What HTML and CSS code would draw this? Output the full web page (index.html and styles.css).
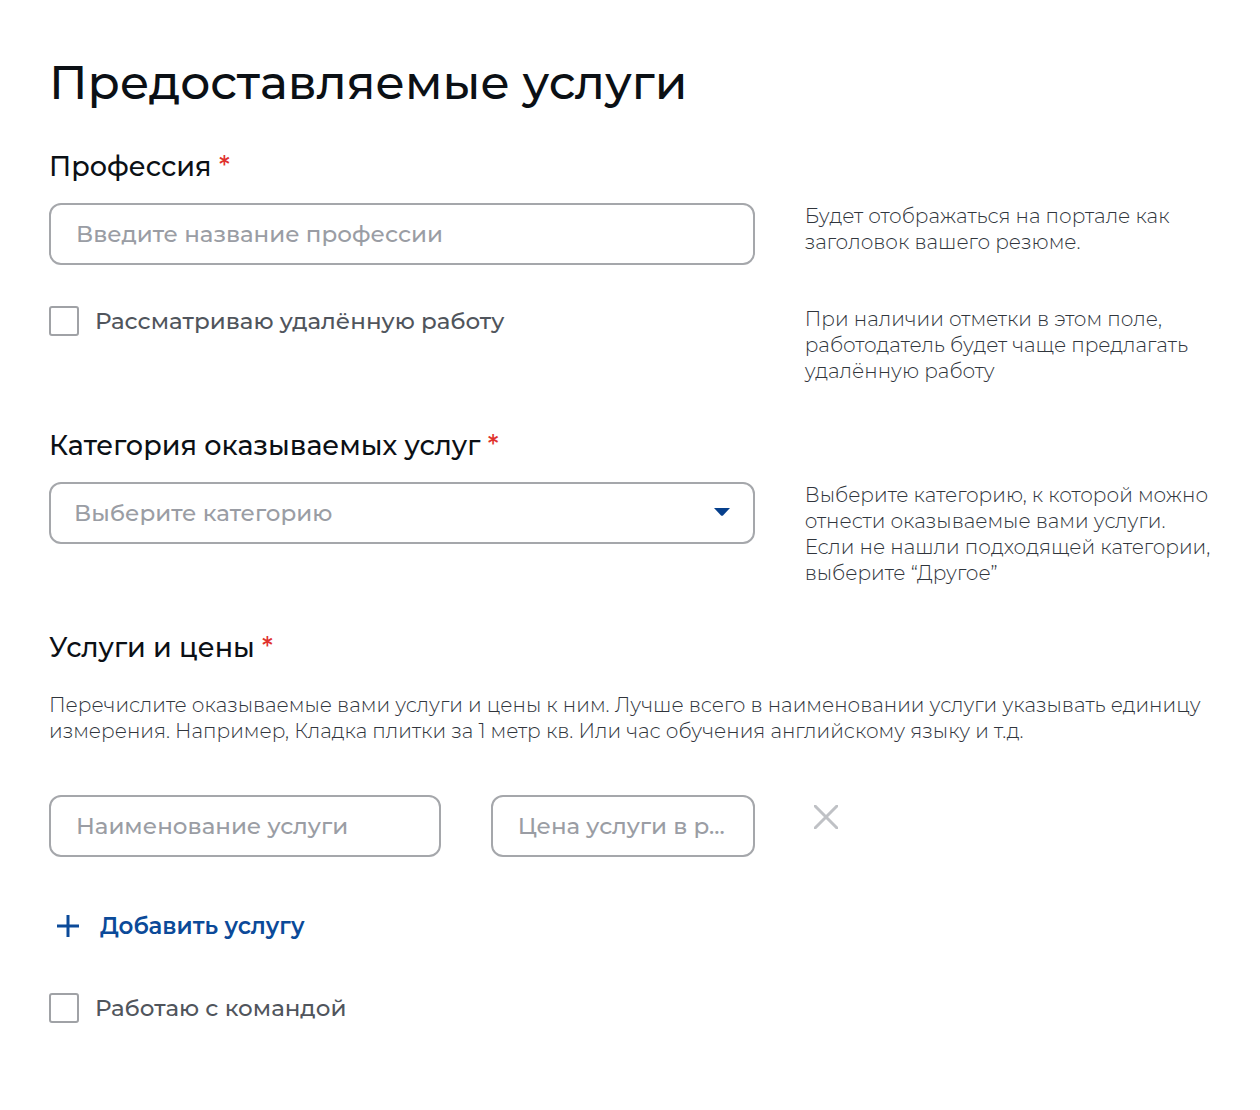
FILE: index.html
```
<!DOCTYPE html>
<html lang="ru">
<head>
	<meta charset="utf-8">
	<meta name="viewport" content="width=device-width, initial-scale=1">
	<title>Предоставляемые услуги</title>
	<link rel="stylesheet" href="styles.css">
</head>
<body>

	<form class="services">
		<h1>Предоставляемые услуги</h1>

		<label class="title" for="profession">Профессия <span class="required">*</span></label>
		<div class="row row-profession">
			<input class="field" id="profession" type="text" placeholder="Введите название профессии" required aria-describedby="profession-hint">
			<p class="hint" id="profession-hint">Будет отображаться на портале как<br>заголовок вашего резюме.</p>
		</div>

		<div class="row">
			<label class="check"><input type="checkbox" name="remote"> Рассматриваю удалённую работу</label>
			<p class="hint">При наличии отметки в этом поле,<br>работодатель будет чаще предлагать<br>удалённую работу</p>
		</div>

		<label class="title" for="category">Категория оказываемых услуг <span class="required">*</span></label>
		<div class="row">
			<div class="select">
				<select class="field" id="category" required>
					<option value="">Выберите категорию</option>
					<option>Другое</option>
				</select>
				<svg class="arrow" width="16" height="8" viewBox="0 0 16 8" aria-hidden="true"><path d="M0 0h16L9 7.4q-1 .8-2 0z"/></svg>
			</div>
			<p class="hint">Выберите категорию, к которой можно<br>отнести оказываемые вами услуги.<br>Если не нашли подходящей категории,<br>выберите “Другое”</p>
		</div>

		<h2 class="title title-services">Услуги и цены <span class="required">*</span></h2>
		<p class="hint">Перечислите оказываемые вами услуги и цены к ним. Лучше всего в наименовании услуги указывать единицу измерения. Например, Кладка плитки за 1 метр кв. Или час обучения английскому языку и т.д.</p>

		<div class="row row-service">
			<div class="service">
				<input class="field" type="text" placeholder="Наименование услуги" aria-label="Наименование услуги">
				<input class="field" type="text" placeholder="Цена услуги в р..." aria-label="Цена услуги">
			</div>
			<button class="remove" type="button" aria-label="Удалить услугу">
				<svg width="24" height="24" viewBox="0 0 24 24"><path d="M1 1l22 22M23 1L1 23"/></svg>
			</button>
		</div>

		<button class="add" type="button">
			<svg width="22" height="22" viewBox="0 0 22 22" aria-hidden="true"><path d="M11 0v22M0 11h22"/></svg>
			Добавить услугу
		</button>

		<label class="check"><input type="checkbox" name="team"> Работаю с командой</label>
	</form>

</body>
</html>
```

FILE: styles.css
```
*
{
	box-sizing: border-box;
}
body
{
	margin: 0;
	background-color: #fff;
	color: #0b1015;
	font-family: Montserrat, Inter, sans-serif;
	font-size: 23px;
	font-weight: 500;
}
input, select, button
{
	font: inherit;
}
.services
{
	padding: 55px 52px 54px 49px;
}


/*
	Titles
*/
h1
{
	margin: 0 0 39px;
	font-size: 47px;
	line-height: 56px;
	font-weight: 500;
}
.title
{
	display: block;
	margin: 0 0 19px;
	font-size: 27px;
	line-height: 34px;
	font-weight: 500;
}
.title-services
{
	margin-bottom: 27px;
}
.required
{
	color: #e0322d;
}


/*
	Rows : control on the left, hint on the right
*/
.row
{
	display: grid;
	grid-template-columns: minmax(0, 7fr) minmax(0, 4fr);
	column-gap: 50px;
	align-items: start;
	margin-bottom: 45px;
}
.row-profession
{
	margin-bottom: 41px;
}
.row-service
{
	margin: 51px 0 52px;
}
.hint
{
	margin: 0;
	font-size: 20px;
	line-height: 26px;
	font-weight: 300;
	color: #30353c;
}
.row .hint
{
	white-space: nowrap;
}


/*
	Controls
*/
.field
{
	display: block;
	width: 100%;
	min-width: 0;
	height: 62px;
	padding: 0 20px 0 25px;
	border: 2px solid #a5a7ab;
	border-radius: 12px;
	background-color: #fff;
	color: #0b1015;
}
.field::placeholder
{
	color: #9a9da4;
	opacity: 1;
}
.select
{
	position: relative;
}
select.field
{
	-webkit-appearance: none;
	appearance: none;
	padding: 0 23px;
	color: #9a9da4;
}
.arrow
{
	position: absolute;
	right: 25px;
	top: 26px;
	fill: #063f8c;
	pointer-events: none;
}
.check
{
	display: flex;
	align-items: center;
	gap: 16px;
	line-height: 30px;
	color: #50555c;
}
.check input
{
	-webkit-appearance: none;
	appearance: none;
	flex: none;
	width: 30px;
	height: 30px;
	margin: 0;
	border: 2px solid #a0a2a6;
	border-radius: 3px;
	background-color: #fff;
}
.check input:checked
{
	background-color: #0d4cd3;
}
.service
{
	display: grid;
	grid-template-columns: minmax(0, 1fr) 264px;
	column-gap: 50px;
}
.remove
{
	display: block;
	justify-self: start;
	padding: 10px 9px;
	border: 0;
	background: none;
	line-height: 0;
	cursor: pointer;
}
.remove path
{
	stroke: #bfc1c5;
	stroke-width: 3;
	stroke-linecap: round;
}
.add
{
	display: flex;
	align-items: center;
	gap: 21px;
	margin-bottom: 50px;
	padding: 0 8px;
	border: 0;
	background: none;
	color: #0b4a99;
	line-height: 34px;
	font-weight: 600;
	cursor: pointer;
}
.add path
{
	stroke: #0b4a99;
	stroke-width: 3;
}
```
